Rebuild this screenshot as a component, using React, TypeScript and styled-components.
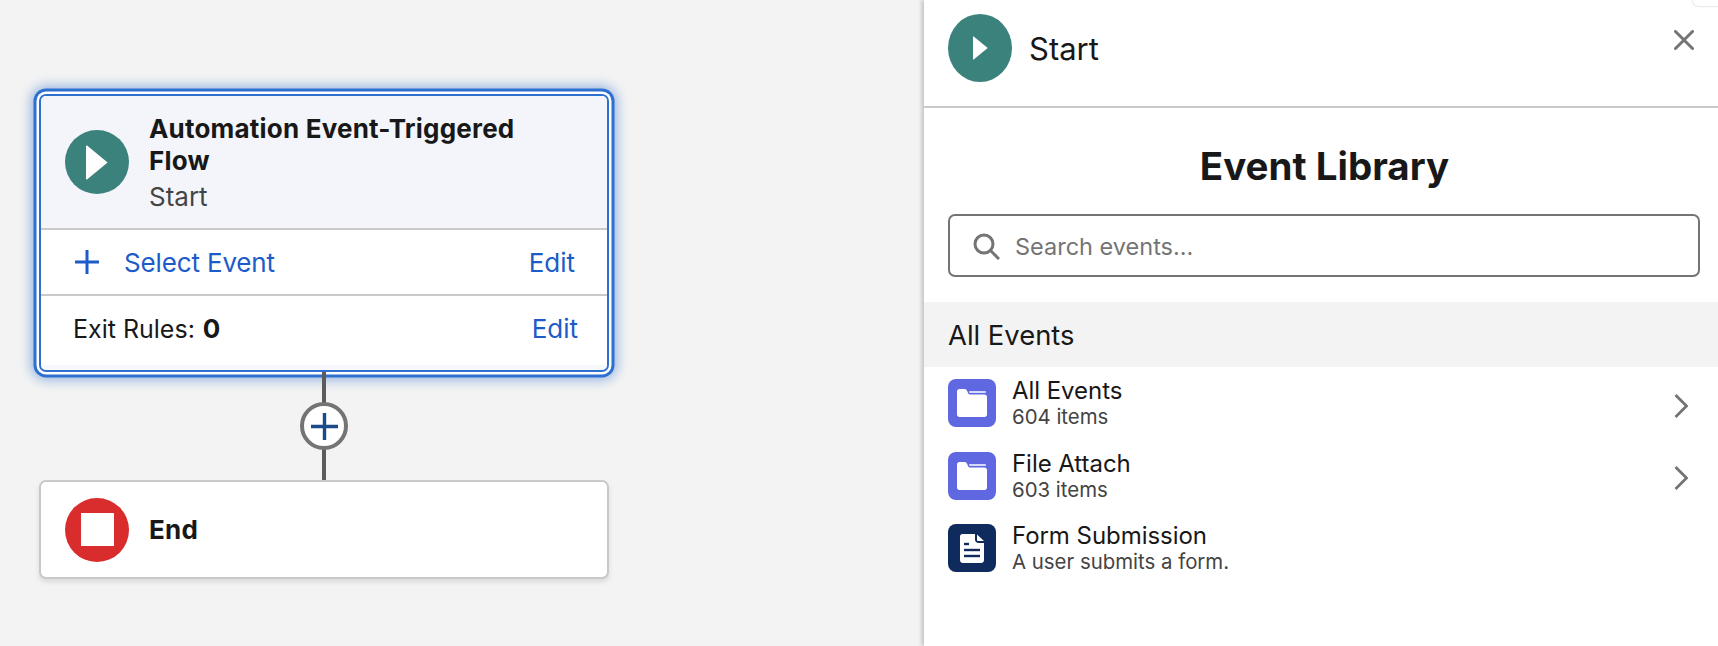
import React from "react";
import styled, { createGlobalStyle } from "styled-components";

const Global = createGlobalStyle`
  html, body { margin: 0; padding: 0; height: 100%; overflow: hidden; }
  body { font-family: Inter, "Liberation Sans", sans-serif; color: #181818; background: #f3f3f3; }
  #root { height: 100%; }
`;

const Page = styled.div`
  display: flex;
  width: 1718px;
  height: 646px;
  overflow: hidden;
`;

const Canvas = styled.main`
  flex: 0 0 924px;
  box-sizing: border-box;
  padding: 94px 0 0 39px;
  display: flex;
  flex-direction: column;
  align-items: flex-start;
`;

const SelectedCard = styled.section`
  width: 570px;
  box-sizing: border-box;
  background: #fff;
  border: 2px solid #2e70cf;
  border-radius: 7px;
  box-shadow: 0 0 0 2.5px #fff, 0 0 0 5.5px #2e70cf, 0 0 12px 8px rgba(46, 112, 207, 0.48);
`;

const CardHeader = styled.header`
  display: flex;
  align-items: center;
  gap: 20px;
  box-sizing: border-box;
  height: 134px;
  padding: 0 0 0 24px;
  background: #f3f5fa;
  border-radius: 5px 5px 0 0;
  border-bottom: 2px solid #c9c9c9;
`;

const IconCircle = styled.span<{ $size: number; $height?: number; $color: string }>`
  flex: none;
  display: flex;
  align-items: center;
  justify-content: center;
  width: ${(p) => p.$size}px;
  height: ${(p) => p.$height ?? p.$size}px;
  border-radius: 50%;
  background: ${(p) => p.$color};
`;

const TitleBlock = styled.div`
  display: flex;
  flex-direction: column;
  width: 400px;
  margin-top: 2px;
`;

const NodeTitle = styled.h3`
  margin: 0;
  font-size: 26px;
  line-height: 32px;
  font-weight: 700;
  letter-spacing: 0.2px;
  color: #181818;
`;

const NodeSub = styled.span`
  padding-top: 3px;
  font-size: 26px;
  line-height: 34px;
  color: #444;
`;

const CardRow = styled.div<{ $height: number; $border?: boolean; $pad?: number }>`
  display: flex;
  align-items: center;
  justify-content: space-between;
  box-sizing: border-box;
  height: ${(p) => p.$height}px;
  padding: 0 32px ${(p) => p.$pad ?? 0}px 32px;
  font-size: 26px;
  ${(p) => (p.$border ? "border-bottom: 2px solid #c9c9c9;" : "")}
`;

const CardFoot = styled.div`
  height: 5px;
  background: #f7f8fc;
  border-radius: 0 0 5px 5px;
`;

const LinkGroup = styled.span`
  display: flex;
  align-items: center;
  gap: 25px;
  margin-left: 2px;
  color: #1d5bc9;
  letter-spacing: -0.15px;
`;

const EditLink = styled.a<{ $shift?: number }>`
  color: #1d5bc9;
  margin-right: ${(p) => p.$shift ?? 0}px;
`;

const RuleLabel = styled.span`
  font-size: 25px;
  color: #181818;
  b { font-size: 26px; font-weight: 700; margin-left: 8px; }
`;

const Connector = styled.div`
  position: relative;
  display: flex;
  align-items: center;
  justify-content: center;
  width: 570px;
  height: 108px;
  &::before {
    content: "";
    position: absolute;
    left: 283px;
    top: 0;
    bottom: 0;
    width: 4px;
    background: #5c5c5c;
  }
`;

const AddButton = styled.span`
  position: relative;
  display: flex;
  align-items: center;
  justify-content: center;
  box-sizing: border-box;
  width: 48px;
  height: 48px;
  border-radius: 50%;
  background: #fff;
  border: 4px solid #747474;
`;

const EndCard = styled.section`
  display: flex;
  align-items: center;
  gap: 20px;
  box-sizing: border-box;
  width: 570px;
  height: 99px;
  padding: 0 0 0 24px;
  background: #fff;
  border: 2px solid #c9c9c9;
  border-radius: 7px;
  box-shadow: 0 3px 5px rgba(0, 0, 0, 0.1);
`;

const StopSquare = styled.span`
  display: block;
  width: 33px;
  height: 33px;
  background: #fff;
`;

const Panel = styled.aside`
  flex: 1;
  position: relative;
  display: flex;
  flex-direction: column;
  background: #fff;
  box-shadow: -3px 0 3px rgba(0, 0, 0, 0.16);
`;

const CornerTab = styled.span`
  position: absolute;
  top: -4px;
  right: -4px;
  width: 29px;
  height: 10px;
  background: #fff;
  border-radius: 8px;
  box-shadow: 0 0 2px rgba(0, 0, 0, 0.3);
`;

const PanelHeader = styled.header`
  display: flex;
  align-items: center;
  gap: 17px;
  box-sizing: border-box;
  height: 108px;
  padding: 0 0 10px 24px;
  border-bottom: 2px solid #c9c9c9;
`;

const PanelStart = styled.span`
  font-size: 31px;
  color: #181818;
`;

const CloseButton = styled.button`
  position: absolute;
  top: 30px;
  right: 24px;
  padding: 0;
  width: 20px;
  height: 20px;
  display: flex;
  border: 0;
  background: none;
`;

const PanelTitle = styled.h1`
  margin: 0;
  padding: 30px 0 0 7px;
  height: 106px;
  box-sizing: border-box;
  text-align: center;
  font-size: 38.5px;
  line-height: 56px;
  font-weight: 700;
  color: #181818;
`;

const Search = styled.div`
  display: flex;
  align-items: center;
  gap: 15px;
  box-sizing: border-box;
  margin: 0 18px 0 24px;
  height: 63px;
  padding: 2px 0 0 23px;
  border: 2px solid #747474;
  border-radius: 7px;
  color: #747474;
  font-size: 23.5px;
`;

const SectionHead = styled.div`
  display: flex;
  align-items: center;
  box-sizing: border-box;
  margin-top: 25px;
  height: 65px;
  padding-left: 24px;
  background: #f3f3f3;
  font-size: 27.4px;
  color: #181818;
`;

const List = styled.ul`
  list-style: none;
  margin: 12px 0 0;
  padding: 0 30px 0 24px;
  display: flex;
  flex-direction: column;
  gap: 24.5px;
`;

const Item = styled.li`
  display: flex;
  align-items: center;
  gap: 16px;
  height: 48px;
`;

const Tile = styled.span<{ $color: string }>`
  flex: none;
  display: flex;
  align-items: center;
  justify-content: center;
  width: 48px;
  height: 48px;
  border-radius: 8px;
  background: ${(p) => p.$color};
`;

const ItemText = styled.div`
  flex: 1;
  display: flex;
  flex-direction: column;
`;

const ItemTitle = styled.span`
  font-size: 24px;
  line-height: 28px;
  letter-spacing: -0.05px;
  color: #181818;
`;

const ItemSub = styled.span`
  font-size: 20.4px;
  line-height: 24px;
  color: #444;
`;

const ChevronWrap = styled.span`
  display: flex;
  margin-top: 5px;
`;

const Play = ({ w, h }: { w: number; h: number }) => (
  <svg width={w} height={h} viewBox="0 0 22 35">
    <path d="M1 0.6 L21.6 17.5 L1 34.4 C0.4 34.8 0 34.4 0 33.8 V1.2 C0 0.6 0.4 0.2 1 0.6 Z" fill="#fff" />
  </svg>
);

const Folder = () => (
  <svg width="30" height="28" viewBox="0 0 30 28">
    <path
      d="M2.5 0 H7.5 C9 0 9.6 0.8 10.2 2 L11 4 C11.5 5 12.4 5.6 13.4 5.6 H27.5 C29 5.6 30 6.6 30 8 V25.5 C30 27 29 28 27.5 28 H2.5 C1 28 0 27 0 25.5 V2.5 C0 1 1 0 2.5 0 Z"
      fill="#fff"
    />
    <rect x="12" y="2.2" width="17" height="1.6" rx="0.8" fill="#fff" />
  </svg>
);

const Doc = () => (
  <svg width="24" height="29" viewBox="0 0 24 29">
    <path
      d="M2.5 0 H15 V5.5 C15 7.5 16.5 9 18.5 9 H24 V26 C24 27.8 22.8 29 21 29 H3 C1.2 29 0 27.8 0 26 V2.5 C0 1 1 0 2.5 0 Z"
      fill="#fff"
    />
    <path d="M17 0.4 L24 7 H18 C17.4 7 17 6.6 17 6 Z" fill="#fff" />
    <rect x="4" y="8.8" width="5" height="2.4" fill="#0f2a5c" />
    <rect x="4" y="14.8" width="16" height="2.4" fill="#0f2a5c" />
    <rect x="4" y="20.8" width="16" height="2.4" fill="#0f2a5c" />
  </svg>
);

const Chevron = () => (
  <ChevronWrap>
    <svg width="14" height="24" viewBox="0 0 14 24" fill="none" stroke="#747474" strokeWidth="2.8">
      <path d="M1.5 1 L12.5 12 L1.5 23" />
    </svg>
  </ChevronWrap>
);

const Plus = ({ size, color, sw }: { size: number; color: string; sw: number }) => (
  <svg width={size} height={size} viewBox={`0 0 ${size} ${size}`} stroke={color} strokeWidth={sw} fill="none">
    <path d={`M${size / 2} 0 V${size} M0 ${size / 2} H${size}`} />
  </svg>
);

const items = [
  { title: "All Events", sub: "604 items", color: "#5f68e0", icon: <Folder />, more: true },
  { title: "File Attach", sub: "603 items", color: "#5f68e0", icon: <Folder />, more: true },
  { title: "Form Submission", sub: "A user submits a form.", color: "#0f2a5c", icon: <Doc />, more: false },
];

export default function App() {
  return (
    <Page>
      <Global />
      <Canvas>
        <SelectedCard>
          <CardHeader>
            <IconCircle $size={64} $color="#3b817c">
              <Play w={22} h={35} />
            </IconCircle>
            <TitleBlock>
              <NodeTitle>Automation Event-Triggered Flow</NodeTitle>
              <NodeSub>Start</NodeSub>
            </TitleBlock>
          </CardHeader>
          <CardRow $height={66} $border>
            <LinkGroup>
              <Plus size={24} color="#1d5bc9" sw={3} />
              <span>Select Event</span>
            </LinkGroup>
            <EditLink>Edit</EditLink>
          </CardRow>
          <CardRow $height={69} $pad={5}>
            <RuleLabel>
              Exit Rules:<b>0</b>
            </RuleLabel>
            <EditLink $shift={-3}>Edit</EditLink>
          </CardRow>
          <CardFoot />
        </SelectedCard>
        <Connector>
          <AddButton>
            <Plus size={27} color="#1b4a8a" sw={3.4} />
          </AddButton>
        </Connector>
        <EndCard>
          <IconCircle $size={64} $color="#d92c2c">
            <StopSquare />
          </IconCircle>
          <NodeTitle>End</NodeTitle>
        </EndCard>
      </Canvas>
      <Panel>
        <CornerTab />
        <PanelHeader>
          <IconCircle $size={64} $height={68} $color="#3b817c">
            <Play w={15} h={24} />
          </IconCircle>
          <PanelStart>Start</PanelStart>
        </PanelHeader>
        <CloseButton aria-label="Close">
          <svg width="20" height="20" viewBox="0 0 20 20" stroke="#747474" strokeWidth="3" fill="none" strokeLinecap="round">
            <path d="M1.5 1.5 L18.5 18.5 M18.5 1.5 L1.5 18.5" />
          </svg>
        </CloseButton>
        <PanelTitle>Event Library</PanelTitle>
        <Search>
          <svg width="27" height="27" viewBox="0 0 27 27" fill="none" stroke="#747474" strokeWidth="3">
            <circle cx="11" cy="11" r="9" />
            <path d="M17.5 17.5 L26 26" />
          </svg>
          <span>Search events...</span>
        </Search>
        <SectionHead>All Events</SectionHead>
        <List>
          {items.map((it) => (
            <Item key={it.title}>
              <Tile $color={it.color}>{it.icon}</Tile>
              <ItemText>
                <ItemTitle>{it.title}</ItemTitle>
                <ItemSub>{it.sub}</ItemSub>
              </ItemText>
              {it.more && <Chevron />}
            </Item>
          ))}
        </List>
      </Panel>
    </Page>
  );
}
